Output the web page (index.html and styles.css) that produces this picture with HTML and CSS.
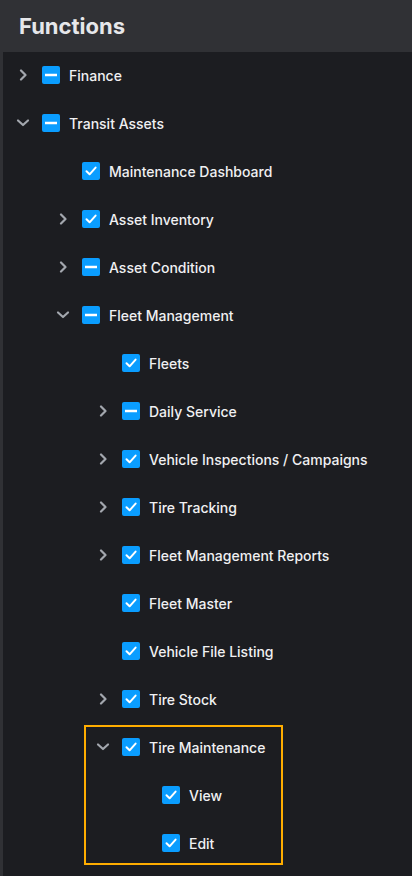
FILE: index.html
```html
<!DOCTYPE html>
<html lang="en">
<head>
<meta charset="utf-8">
<title>Functions</title>
<link rel="stylesheet" href="styles.css">
</head>
<body>
<div class="panel">
  <header class="head">Functions</header>
  <div class="tree">
    <div class="row l0"><span class="tog"><svg class="chev-r" viewBox="0 0 10 12"><path d="M3 1.5 L7.5 6 L3 10.5"/></svg></span><span class="cb"><svg viewBox="0 0 18 18"><rect x="3" y="7.75" width="12" height="2.5" fill="#fff"/></svg></span><span class="lbl">Finance</span></div>
    <div class="row l0"><span class="tog"><svg class="chev-d" viewBox="0 0 14 10"><path d="M2 2.5 L7 7 L12 2.5"/></svg></span><span class="cb"><svg viewBox="0 0 18 18"><rect x="3" y="7.75" width="12" height="2.5" fill="#fff"/></svg></span><span class="lbl">Transit Assets</span></div>
    <div class="row l1"><span class="tog"></span><span class="cb"><svg viewBox="0 0 18 18"><path class="ck" d="M4.5 9.3 L7.6 12.3 L13.6 5.6"/></svg></span><span class="lbl">Maintenance Dashboard</span></div>
    <div class="row l1"><span class="tog"><svg class="chev-r" viewBox="0 0 10 12"><path d="M3 1.5 L7.5 6 L3 10.5"/></svg></span><span class="cb"><svg viewBox="0 0 18 18"><path class="ck" d="M4.5 9.3 L7.6 12.3 L13.6 5.6"/></svg></span><span class="lbl">Asset Inventory</span></div>
    <div class="row l1"><span class="tog"><svg class="chev-r" viewBox="0 0 10 12"><path d="M3 1.5 L7.5 6 L3 10.5"/></svg></span><span class="cb"><svg viewBox="0 0 18 18"><rect x="3" y="7.75" width="12" height="2.5" fill="#fff"/></svg></span><span class="lbl">Asset Condition</span></div>
    <div class="row l1"><span class="tog"><svg class="chev-d" viewBox="0 0 14 10"><path d="M2 2.5 L7 7 L12 2.5"/></svg></span><span class="cb"><svg viewBox="0 0 18 18"><rect x="3" y="7.75" width="12" height="2.5" fill="#fff"/></svg></span><span class="lbl">Fleet Management</span></div>
    <div class="row l2"><span class="tog"></span><span class="cb"><svg viewBox="0 0 18 18"><path class="ck" d="M4.5 9.3 L7.6 12.3 L13.6 5.6"/></svg></span><span class="lbl">Fleets</span></div>
    <div class="row l2"><span class="tog"><svg class="chev-r" viewBox="0 0 10 12"><path d="M3 1.5 L7.5 6 L3 10.5"/></svg></span><span class="cb"><svg viewBox="0 0 18 18"><rect x="3" y="7.75" width="12" height="2.5" fill="#fff"/></svg></span><span class="lbl">Daily Service</span></div>
    <div class="row l2"><span class="tog"><svg class="chev-r" viewBox="0 0 10 12"><path d="M3 1.5 L7.5 6 L3 10.5"/></svg></span><span class="cb"><svg viewBox="0 0 18 18"><path class="ck" d="M4.5 9.3 L7.6 12.3 L13.6 5.6"/></svg></span><span class="lbl">Vehicle Inspections / Campaigns</span></div>
    <div class="row l2"><span class="tog"><svg class="chev-r" viewBox="0 0 10 12"><path d="M3 1.5 L7.5 6 L3 10.5"/></svg></span><span class="cb"><svg viewBox="0 0 18 18"><path class="ck" d="M4.5 9.3 L7.6 12.3 L13.6 5.6"/></svg></span><span class="lbl">Tire Tracking</span></div>
    <div class="row l2"><span class="tog"><svg class="chev-r" viewBox="0 0 10 12"><path d="M3 1.5 L7.5 6 L3 10.5"/></svg></span><span class="cb"><svg viewBox="0 0 18 18"><path class="ck" d="M4.5 9.3 L7.6 12.3 L13.6 5.6"/></svg></span><span class="lbl">Fleet Management Reports</span></div>
    <div class="row l2"><span class="tog"></span><span class="cb"><svg viewBox="0 0 18 18"><path class="ck" d="M4.5 9.3 L7.6 12.3 L13.6 5.6"/></svg></span><span class="lbl">Fleet Master</span></div>
    <div class="row l2"><span class="tog"></span><span class="cb"><svg viewBox="0 0 18 18"><path class="ck" d="M4.5 9.3 L7.6 12.3 L13.6 5.6"/></svg></span><span class="lbl">Vehicle File Listing</span></div>
    <div class="row l2"><span class="tog"><svg class="chev-r" viewBox="0 0 10 12"><path d="M3 1.5 L7.5 6 L3 10.5"/></svg></span><span class="cb"><svg viewBox="0 0 18 18"><path class="ck" d="M4.5 9.3 L7.6 12.3 L13.6 5.6"/></svg></span><span class="lbl">Tire Stock</span></div>
    <div class="focus">
      <div class="focus-inner">
        <div class="row f2"><span class="tog"><svg class="chev-d" viewBox="0 0 14 10"><path d="M2 2.5 L7 7 L12 2.5"/></svg></span><span class="cb"><svg viewBox="0 0 18 18"><path class="ck" d="M4.5 9.3 L7.6 12.3 L13.6 5.6"/></svg></span><span class="lbl">Tire Maintenance</span></div>
        <div class="row f3"><span class="tog"></span><span class="cb"><svg viewBox="0 0 18 18"><path class="ck" d="M4.5 9.3 L7.6 12.3 L13.6 5.6"/></svg></span><span class="lbl">View</span></div>
        <div class="row f3"><span class="tog"></span><span class="cb"><svg viewBox="0 0 18 18"><path class="ck" d="M4.5 9.3 L7.6 12.3 L13.6 5.6"/></svg></span><span class="lbl">Edit</span></div>
      </div>
    </div>
  </div>
</div>
</body>
</html>
```
FILE: styles.css
```css
html, body {
  margin: 0;
  padding: 0;
  background: #1c1d21;
}
body {
  font-family: Inter, "Noto Sans", sans-serif;
  color: #f0f0f2;
}
.panel {
  width: 412px;
  height: 876px;
  overflow: hidden;
  box-sizing: border-box;
  border-left: 3px solid #303135;
  background: #1c1d21;
}
.head {
  margin-left: -3px;
  height: 52px;
  background: #303135;
  box-sizing: border-box;
  padding-left: 19px;
  display: flex;
  align-items: center;
  font-size: 22px;
  font-weight: 700;
  color: #e6e7ea;
  letter-spacing: 0;
}
.tree {
  display: flex;
  flex-direction: column;
  margin-top: -1px;
}
.row {
  height: 48px;
  display: flex;
  align-items: center;
  font-size: 14px;
  font-weight: 500;
  white-space: nowrap;
}
.l0 { padding-left: 10px; }
.l1 { padding-left: 50px; }
.l2 { padding-left: 90px; }
.f2 { padding-left: 7px; }
.f3 { padding-left: 47px; }
.tog {
  width: 20px;
  height: 20px;
  margin-right: 9px;
  display: flex;
  align-items: center;
  justify-content: center;
  flex: none;
}
.tog svg path {
  fill: none;
  stroke: #a3a7ae;
  stroke-width: 2.2;
  stroke-linecap: round;
  stroke-linejoin: round;
}
.chev-r { width: 10px; height: 12px; }
.chev-d { width: 14px; height: 10px; }
.cb {
  width: 18px;
  height: 18px;
  border-radius: 2px;
  background: #0a9dff;
  margin-right: 9px;
  flex: none;
  display: flex;
}
.cb svg { width: 18px; height: 18px; }
.ck {
  fill: none;
  stroke: #fff;
  stroke-width: 2;
  stroke-linecap: round;
  stroke-linejoin: round;
}
.lbl { color: #f0f0f2; }
.focus {
  margin: 2px 0 2px 81px;
  width: 199px;
  box-sizing: border-box;
  border: 2px solid #ffad00;
}
.focus-inner {
  margin: -4px 0 -4px;
}
```
